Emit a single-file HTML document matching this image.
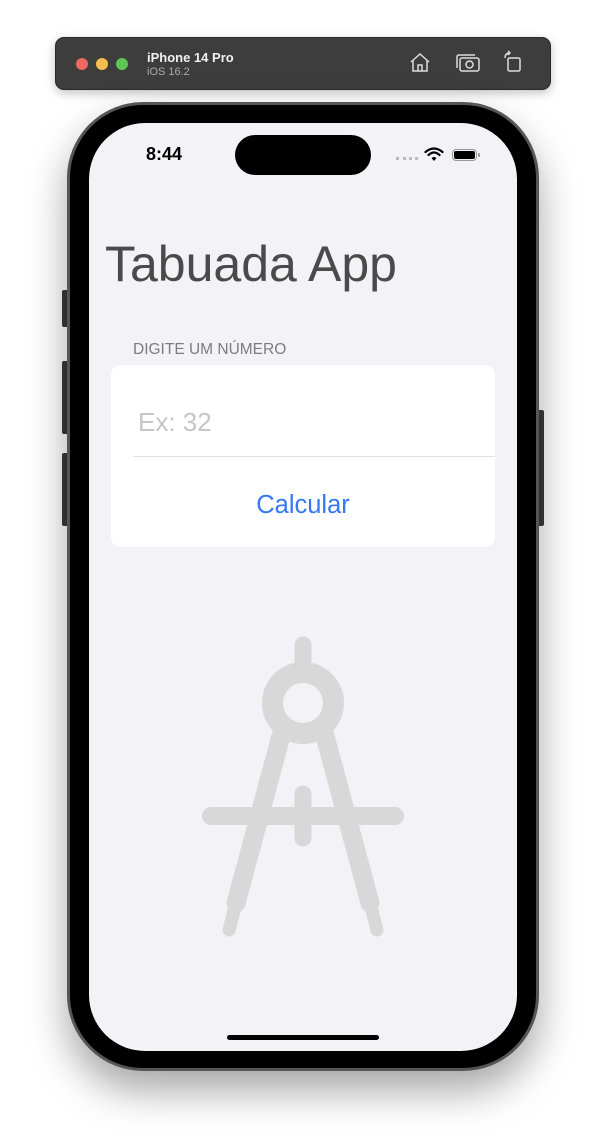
<!DOCTYPE html>
<html><head><meta charset="utf-8"><style>
*{margin:0;padding:0;box-sizing:border-box}
body{width:606px;height:1147px;background:#fff;position:relative;overflow:hidden;font-family:"Liberation Sans",sans-serif}
.a{position:absolute}
</style></head><body>
<!-- toolbar -->
<div class="a" style="left:55px;top:37px;width:496px;height:53px;background:#3d3d3d;border-radius:9px;box-shadow:0 3px 10px rgba(0,0,0,.25);border:1px solid #2a2a2a"></div>
<div class="a" style="left:76px;top:58px;width:12px;height:12px;border-radius:50%;background:#ec6a5e"></div>
<div class="a" style="left:96px;top:58px;width:12px;height:12px;border-radius:50%;background:#f4bf4f"></div>
<div class="a" style="left:116px;top:58px;width:12px;height:12px;border-radius:50%;background:#61c554"></div>
<div class="a" style="left:147px;top:50px;color:#f0f0f0;font-size:13px;font-weight:bold">iPhone 14 Pro</div>
<div class="a" style="left:147px;top:66px;color:#aaa;font-size:11px">iOS 16.2</div>
<svg class="a" style="left:405px;top:48px" width="130" height="30" viewBox="0 0 130 30" fill="none" stroke="#ddd" stroke-width="1.5">
<path d="M6 14 L15 6 L24 14 M8 12 V23 H22 V12 M13 23 V17 H17 V23"/>
<rect x="55" y="10" width="19" height="13" rx="2"/><path d="M52 20 V9 Q52 7 54 7 H70"/><circle cx="64.5" cy="16.5" r="3.5"/>
<rect x="103" y="10" width="12" height="13" rx="1.5"/><path d="M100 10 Q100 5 105 5 M103 3 L105 5 L103 7"/>
</svg>
<!-- side buttons -->
<div class="a" style="left:62px;top:290px;width:8px;height:37px;background:#3a3a3a;border-radius:2px"></div>
<div class="a" style="left:62px;top:361px;width:8px;height:73px;background:#3a3a3a;border-radius:2px"></div>
<div class="a" style="left:62px;top:453px;width:8px;height:73px;background:#3a3a3a;border-radius:2px"></div>
<div class="a" style="left:536px;top:410px;width:8px;height:116px;background:#3a3a3a;border-radius:2px"></div>
<!-- phone body -->
<div class="a" style="left:67px;top:102px;width:472px;height:969px;border-radius:76px;background:#000;border:3px solid #555;box-shadow:0 20px 40px rgba(0,0,0,.35)"></div>
<div class="a" style="left:89px;top:123px;width:428px;height:928px;border-radius:56px;background:#f2f2f7;overflow:hidden">
  <div class="a" style="left:57px;top:21px;font-size:18px;font-weight:bold;color:#000">8:44</div>
  <div class="a" style="left:146px;top:12px;width:136px;height:40px;border-radius:20px;background:#000"></div>
  <div class="a" style="left:307px;top:34px;width:22px;height:3px;border-top:3px dotted #bbb"></div>
  <svg class="a" style="left:335px;top:24px" width="20" height="16" viewBox="0 0 20 16"><path d="M10 14 L7.5 11 Q10 9 12.5 11 Z" fill="#000"/><path d="M4.5 8 Q10 3 15.5 8 M1.5 5 Q10 -2 18.5 5" stroke="#000" stroke-width="2.2" fill="none" stroke-linecap="round"/></svg>
  <div class="a" style="left:363px;top:26px;width:25px;height:12px;border-radius:4px;border:1px solid #999;padding:1px"><div style="width:100%;height:100%;background:#000;border-radius:2px"></div></div>
  <div class="a" style="left:389px;top:30px;width:2px;height:4px;background:#999;border-radius:1px"></div>
  <div class="a" style="left:16px;top:112px;font-size:50px;font-weight:300;color:#4a4a4a;letter-spacing:0;white-space:nowrap">Tabuada App</div>
  <div class="a" style="left:44px;top:218px;font-size:15.5px;color:#7c7c80">DIGITE UM NÚMERO</div>
  <div class="a" style="left:22px;top:242px;width:384px;height:182px;background:#fff;border-radius:10px;overflow:hidden">
    <div class="a" style="left:27px;top:42px;font-size:26px;color:#c6c6c8">Ex: 32</div>
    <div class="a" style="left:22px;top:91px;width:362px;height:1px;background:#e2e2e4"></div>
    <div class="a" style="left:0;top:126px;width:384px;text-align:center;font-size:25.5px;color:#3478f6">Calcular</div>
  </div>
  <div class="a" style="left:138px;top:912px;width:152px;height:5px;border-radius:3px;background:#000"></div>
  <svg class="a" style="left:0;top:0" width="428" height="928" viewBox="89 123 428 928" fill="none" stroke="#d8d8d8" stroke-linecap="round">
    <path d="M303 645 V665" stroke-width="17"/>
    <circle cx="303" cy="703" r="30.5" stroke-width="21"/>
    <path d="M281 736 L236 903 M325 736 L370 903" stroke-width="19"/>
    <path d="M236 903 L229 930 M370 903 L377 930" stroke-width="13"/>
    <path d="M211 816 H395" stroke-width="18"/>
    <path d="M303 794 V838" stroke-width="17"/>
  </svg>
</div>
</body></html>
